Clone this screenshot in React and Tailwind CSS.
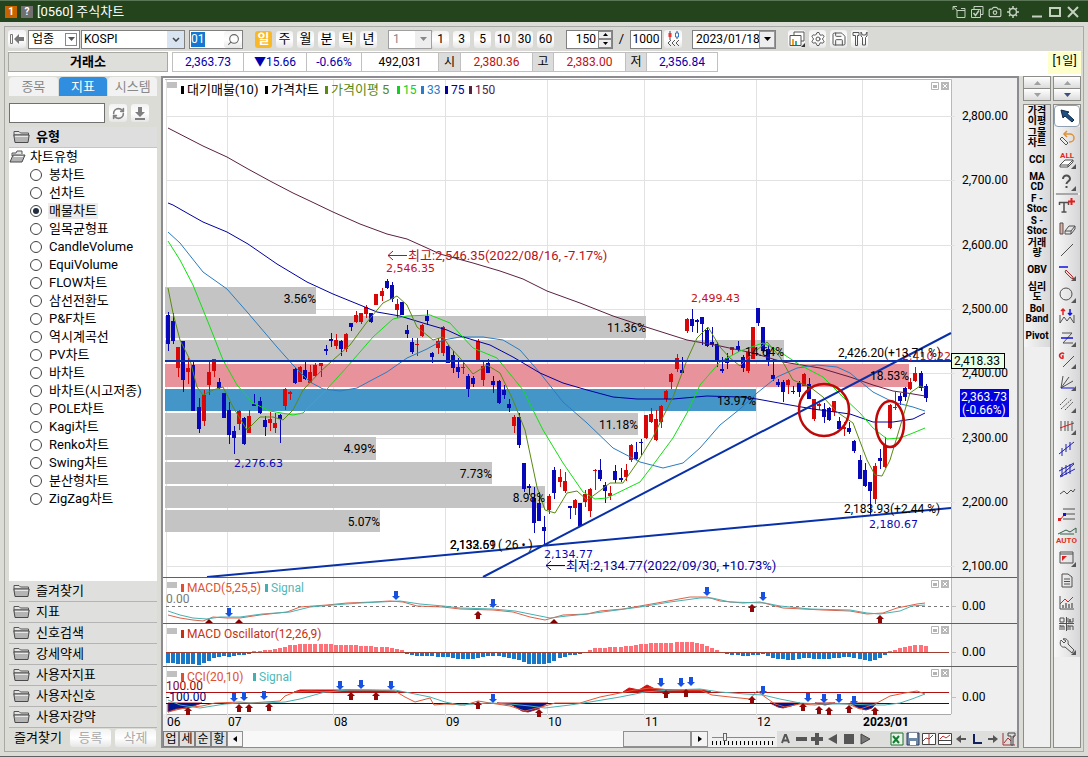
/**
 * @file App.jsx
 *
 * @description
 * [0560] 주식차트 화면.
 * 상단 툴바 / 시세 바 / 지표 트리 / 차트 / 우측 도구 막대로 구성된다.
 * 차트 좌표는 화면 픽셀 기준이며 viewBox 로 맞춘다.
 */

import React, { useState } from 'react';
import { RefreshCw, Search, Camera, Settings, Save } from 'lucide-react';

// ---------------------------------------------------------
// [차트 데이터]
// 봉: [고가y, 몸통상단y, 몸통하단y, 저가y, 양봉여부]
// ---------------------------------------------------------
const CANDLES = [
    [312, 315, 344, 351, 0], [313, 321, 341, 344, 0], [347, 347, 368, 377, 1], [341, 341, 380, 392, 0], [358, 368, 372, 384, 1],
    [362, 365, 411, 411, 0], [398, 407, 429, 433, 0], [390, 395, 421, 426, 1], [362, 372, 385, 395, 1], [359, 359, 371, 377, 1],
    [378, 382, 388, 389, 0], [393, 393, 418, 418, 0], [402, 410, 435, 444, 0], [426, 431, 438, 454, 0], [410, 411, 424, 430, 1],
    [417, 418, 444, 445, 0], [410, 416, 433, 433, 1], [394, 404, 406, 406, 0], [397, 401, 413, 414, 0], [416, 420, 427, 436, 0],
    [412, 419, 423, 431, 1], [413, 423, 428, 433, 1], [414, 415, 419, 443, 0], [388, 389, 406, 410, 1], [391, 392, 394, 400, 1],
    [367, 369, 383, 384, 0], [366, 367, 382, 382, 1], [362, 370, 379, 380, 0], [365, 372, 383, 383, 1], [363, 365, 376, 377, 1],
    [363, 363, 366, 377, 1], [345, 349, 351, 355, 0], [333, 339, 341, 347, 0], [334, 340, 346, 349, 1], [340, 341, 349, 356, 0],
    [333, 334, 349, 352, 1], [323, 323, 327, 331, 0], [311, 315, 322, 323, 1], [313, 313, 322, 324, 1], [305, 307, 314, 318, 1],
    [313, 313, 322, 323, 0], [294, 294, 305, 305, 1], [288, 291, 296, 301, 1], [279, 281, 288, 289, 0], [282, 285, 299, 302, 0],
    [299, 304, 310, 318, 1], [302, 302, 315, 315, 0], [325, 330, 334, 338, 0], [338, 342, 352, 354, 0], [338, 344, 345, 356, 1],
    [324, 325, 336, 337, 1], [310, 316, 321, 325, 0], [352, 353, 357, 363, 0], [338, 341, 348, 354, 1], [326, 327, 353, 356, 1],
    [345, 346, 363, 363, 0], [351, 355, 368, 373, 0], [358, 367, 372, 378, 0], [360, 367, 368, 374, 1], [374, 376, 389, 397, 0],
    [376, 378, 384, 387, 0], [339, 341, 360, 360, 1], [360, 366, 380, 386, 1], [359, 363, 373, 373, 0], [376, 381, 385, 393, 0],
    [380, 381, 403, 404, 0], [385, 390, 395, 399, 0], [399, 404, 408, 412, 0], [415, 417, 426, 433, 1], [413, 417, 445, 448, 0],
    [463, 463, 489, 492, 0], [484, 486, 488, 495, 0], [487, 498, 523, 533, 0], [492, 503, 521, 521, 0], [516, 527, 531, 545, 0],
    [494, 496, 510, 514, 1], [467, 470, 493, 499, 0], [469, 477, 482, 487, 1], [472, 481, 491, 493, 1], [506, 506, 508, 519, 0],
    [499, 500, 508, 515, 1], [503, 503, 526, 526, 0], [490, 494, 502, 507, 1], [488, 489, 511, 517, 1], [469, 470, 471, 490, 1],
    [459, 470, 479, 481, 0], [482, 485, 491, 503, 0], [486, 493, 496, 500, 1], [465, 471, 480, 483, 0], [468, 478, 480, 482, 0],
    [464, 470, 477, 481, 1], [444, 445, 460, 462, 1], [442, 452, 459, 460, 0], [439, 442, 443, 455, 0], [415, 415, 438, 439, 1],
    [408, 414, 422, 423, 1], [410, 419, 440, 441, 1], [405, 406, 422, 428, 1], [390, 391, 399, 402, 1], [373, 374, 382, 389, 1],
    [354, 358, 369, 372, 1], [357, 370, 373, 373, 0], [318, 319, 331, 333, 1], [309, 319, 326, 332, 0], [319, 320, 322, 333, 0],
    [317, 317, 324, 345, 0], [328, 330, 346, 347, 0], [327, 342, 345, 347, 0], [342, 344, 362, 367, 0], [357, 369, 371, 373, 0],
    [353, 358, 363, 369, 0], [347, 347, 350, 355, 1], [341, 346, 350, 352, 0], [355, 357, 368, 372, 0], [350, 352, 371, 373, 1],
    [327, 327, 359, 359, 1], [308, 308, 323, 326, 0], [327, 327, 351, 353, 0], [345, 349, 360, 366, 0], [359, 375, 379, 381, 0],
    [379, 382, 385, 387, 0], [380, 382, 392, 402, 0], [379, 380, 385, 394, 1], [386, 391, 392, 394, 0], [381, 383, 392, 397, 0],
    [373, 374, 386, 386, 1], [378, 384, 399, 399, 0], [399, 399, 419, 421, 1], [403, 404, 406, 410, 1], [403, 409, 417, 423, 0],
    [407, 408, 420, 421, 0], [401, 401, 412, 416, 1], [417, 421, 429, 431, 0], [422, 427, 429, 436, 1], [422, 428, 432, 434, 0],
    [440, 441, 451, 453, 0], [455, 460, 479, 479, 0], [463, 470, 486, 487, 0], [482, 482, 491, 515, 0], [463, 466, 499, 504, 1],
    [449, 458, 461, 469, 0], [437, 445, 467, 468, 1], [404, 405, 428, 429, 1], [392, 407, 408, 410, 1], [393, 396, 401, 405, 0],
    [387, 388, 397, 401, 0], [378, 382, 389, 390, 1], [367, 373, 381, 382, 1], [371, 373, 388, 391, 0], [384, 386, 398, 402, 0],
];
const candleX = (i) => Math.round(168 + 5.085 * i);

// 이동평균선
const MA_LINES = [
    { color: '#5a2040', points: '168,128 203,146 227,157 248,169 270,181 293,193 310,201 333,212 360,224 387,234 407,239 427,248 440,254 473,263 500,271 523,279 547,291 580,303 613,316 646,327 687,340 720,346 753,353 783,362 820,368 850,377 873,385 893,391 907,393 925,396' },
    { color: '#2a7cc0', points: '168,232 180,243 203,272 227,289 248,313 277,347 293,365 310,382 323,389 340,391 357,388 370,381 387,372 407,358 427,349 443,340 460,337 483,337 503,340 520,350 540,373 563,402 587,423 613,448 640,462 663,468 683,463 700,448 720,425 740,409 757,393 777,377 797,368 817,365 837,367 850,373 873,392 893,402 913,407 925,411' },
    { color: '#0000a0', points: '168,203 173,205 187,213 203,222 227,232 248,244 277,264 307,282 333,294 360,305 377,312 400,316 423,323 447,330 460,336 490,345 513,357 540,373 563,383 587,390 613,397 637,399 673,399 707,396 740,397 757,399 790,405 813,409 850,414 873,422 893,422 913,419 925,413' },
    { color: '#10e010', points: '168,241 180,260 193,285 210,327 223,360 237,385 253,403 270,411 293,415 303,413 327,389 347,367 373,337 393,319 407,316 430,315 440,319 450,323 460,334 473,348 497,358 523,390 543,430 563,463 583,492 595,499 607,498 640,482 653,465 673,438 687,413 700,385 720,362 740,351 763,343 777,350 800,365 823,377 843,397 860,413 873,428 887,439 900,438 913,433 925,428' },
    { color: '#5a8a10', points: '168,288 173,313 180,340 190,360 197,387 203,395 213,390 223,387 233,407 247,430 260,417 273,417 283,420 293,410 303,390 320,372 333,360 350,345 367,322 383,303 397,296 407,305 417,327 433,340 443,337 450,347 460,358 473,374 487,365 500,373 513,400 525,430 537,487 545,510 555,513 567,493 577,491 587,500 597,493 610,483 623,483 637,463 653,437 673,397 687,360 697,338 708,327 720,347 730,358 740,366 753,353 767,342 780,357 793,380 810,387 823,397 837,412 853,423 867,460 875,475 882,476 890,460 900,427 910,393 920,386 925,388' },
];

// 매물대: [y, 높이, 우측x, 색, 비율]
const BANDS = [
    [287, 27, 316, '#c4c4c4', '3.56%'],
    [316, 22, 646, '#c4c4c4', '11.36%'],
    [340, 22, 784, '#c4c4c4', '14.64%'],
    [364, 23, 909, '#e8929c', '18.53%'],
    [389, 22, 756, '#4496c8', '13.97%'],
    [413, 22, 638, '#c4c4c4', '11.18%'],
    [437, 23, 376, '#c4c4c4', '4.99%'],
    [462, 22, 492, '#c4c4c4', '7.73%'],
    [486, 22, 545, '#c4c4c4', '8.98%'],
    [510, 22, 380, '#c4c4c4', '5.07%'],
];

const PRICES = [[116, '2,800.00'], [180, '2,700.00'], [245, '2,600.00'], [309, '2,500.00'], [373, '2,400.00'], [438, '2,300.00'], [502, '2,200.00'], [566, '2,100.00']];
const MONTHS = [[166, '06'], [227, '07'], [333, '08'], [445, '09'], [547, '10'], [644, '11'], [756, '12'], [862, '2023/01']];

const LEGEND = [
    [181, '대기매물(10)', '#000000', 13], [265, '가격차트', '#000000', 13], [325, '가격이평 5', '#5a8a10', 13], [397, '15', '#10d020', 12],
    [421, '33', '#2a7cc8', 12], [445, '75', '#0000a0', 12], [469, '150', '#5a2040', 12],
];

// MACD 오실레이터: [x, 값(px)] 기준점을 봉 간격으로 보간한다
const OSC = [
    [168, -10], [185, -11], [192, -11], [198, -12], [208, -9], [213, -5], [222, -3], [232, -4], [240, -2], [251, -1], [254, 1],
    [268, 2], [280, 4], [292, 7], [300, 8], [333, 8], [337, 7], [356, 7], [360, 6], [390, 5], [397, 3], [404, 1], [407, -1],
    [418, -3], [447, -4], [460, -6], [473, -6], [480, -4], [493, -3], [505, -4], [513, -6], [522, -8], [530, -11], [545, -11],
    [552, -9], [560, -5], [572, -2], [582, -1], [587, 1], [594, 4], [620, 5], [632, 6], [644, 8], [652, 9], [666, 9], [677, 10], [692, 10],
    [700, 8], [708, 6], [713, 3], [720, 0.5], [725, -1], [743, -3], [755, -2], [763, -1], [770, -4], [777, -6], [790, -7],
    [803, -5], [823, -6], [836, -5], [850, -4], [860, -6], [870, -8], [877, -6], [884, -3], [888, -1], [890, 1], [897, 3], [907, 5], [917, 7], [925, 6],
];
function oscAt(x) {
    const k = Math.max(1, OSC.findIndex((p) => p[0] >= x));
    const [x0, v0] = OSC[k - 1];
    const [x1, v1] = OSC[k];
    return v0 + ((v1 - v0) * (x - x0)) / (x1 - x0);
}

// 매매 신호 화살표: [x, 꼭지y]
const DOWN_ARROWS = [
    [229, 617], [396, 600], [493, 608], [707, 596], [763, 601],
    [234, 702], [244, 701], [264, 700], [340, 690], [361, 689], [391, 690], [493, 703],
    [661, 687], [681, 687], [691, 686], [763, 695], [808, 702], [824, 703], [839, 703], [854, 705],
];
const UP_ARROWS = [
    [478, 611], [752, 604], [880, 615], [188, 707], [239, 704], [249, 704], [269, 703], [351, 692], [376, 692],
    [478, 701], [539, 709], [666, 690], [686, 689], [752, 696], [803, 703], [819, 706], [829, 707], [849, 705], [875, 707],
];

// ---------------------------------------------------------
// [트리 / 도구 목록]
// ---------------------------------------------------------
const CHART_TYPES = [
    '봉차트', '선차트', '매물차트', '일목균형표', 'CandleVolume', 'EquiVolume', 'FLOW차트', '삼선전환도', 'P&F차트', '역시계곡선',
    'PV차트', '바차트', '바차트(시고저종)', 'POLE차트', 'Kagi차트', 'Renko차트', 'Swing차트', '분산형차트', 'ZigZag차트',
];
const FOLDERS = ['즐겨찾기', '지표', '신호검색', '강세약세', '사용자지표', '사용자신호', '사용자강약'];
const QUICK = [['가격', '이평'], ['그물', '차트'], ['CCI'], ['MA', 'CD'], ['F -', 'Stoc'], ['S -', 'Stoc'], ['거래', '량'], ['OBV'], ['심리', '도'], ['Bol', 'Band'], ['Pivot']];

const btn = 'flex items-center justify-center rounded-[3px] bg-gradient-to-b from-[#f2f2f2] via-white to-[#e6e6e6]';

function Folder({ open }) {
    return (
        <svg width="17" height="14" viewBox="0 0 17 14" className="shrink-0">
            <path d={open ? 'M3 6V3h4l1-2h5v3' : 'M1 3V1.5h5l1.5 1.5h8V5H1z'} fill="#e4e4e4" stroke="#555" />
            <path d={open ? 'M1 12L4 5h12l-3 7z' : 'M.8 5h15.4L15 12.5H2z'} fill="#b4b4b4" stroke="#4a4a4a" />
            <path d={open ? 'M5 6.5h9' : 'M2 6.3h13'} stroke="#f4f4f4" />
        </svg>
    );
}

function Arrow({ dir = 'down', color = '#000' }) {
    const d = { down: 'M0 0h7L3.500 4z', up: 'M0 4h7L3.500 0z' }[dir];
    return (
        <svg width="7" height="4" viewBox="0 0 7 4" className="shrink-0"><path d={d} fill={color} /></svg>
    );
}

/* ── 타이틀 바 ─────────────────────────────────────── */
function TitleBar() {
    return (
        <header className="flex h-[22px] items-center gap-1 border-t border-[#5b7557] bg-[#24441e] pl-[5px] pr-2 text-white">
            <span className="flex h-3 w-3 items-center justify-center bg-[#c86400] text-[10px] leading-3 font-bold">1</span>
            <span className="flex h-3 w-3 items-center justify-center bg-[#707070] text-[10px] leading-3 font-bold">?</span>
            <h1 className="flex-1 text-[13px] leading-5">[0560] 주식차트</h1>
            <div className="flex items-center gap-1 text-[#c4d0c0]">
                <button aria-label="분리">
                    <svg width="14" height="14" fill="none" stroke="currentColor"><path d="M5 5V12.500h8V5.500H6M9 3.500h4v2" /><path d="M6 6L1 1.500M1 5V1.500h4" /></svg>
                </button>
                <button aria-label="복사">
                    <svg width="14" height="14" fill="none" stroke="currentColor"><path d="M4 4V1.500h9v8h-2.500M1.500 4.500h9v8h-9z" /><path d="M3.500 8l2 2.500L9 5.500" strokeWidth="1.500" /></svg>
                </button>
                <button aria-label="캡처"><Camera size={14} /></button>
                <button aria-label="설정">
                    <svg width="14" height="14" fill="none" stroke="currentColor"><circle cx="7" cy="7" r="3.500" strokeWidth="1.500" /><path d="M7 1v2M7 11v2M1 7h2M11 7h2M3 3l1.500 1.500M9.500 9.500L11 11M11 3L9.500 4.500M4.500 9.500L3 11" strokeWidth="1.500" /></svg>
                </button>
                <button aria-label="최소화" className="ml-1.5"><svg width="14" height="14"><path d="M2 11.500h10" stroke="currentColor" strokeWidth="2" /></svg></button>
                <button aria-label="최대화"><svg width="14" height="14"><path d="M2 3h10v8H2z" fill="none" stroke="currentColor" strokeWidth="2" /></svg></button>
                <button aria-label="닫기"><svg width="14" height="14"><path d="M2 2l10 10M12 2L2 12" stroke="currentColor" strokeWidth="2" /></svg></button>
            </div>
        </header>
    );
}

/* ── 상단 툴바 ─────────────────────────────────────── */
function Toolbar() {
    const [period, setPeriod] = useState('일');
    const field = 'h-[19px] border border-[#808080] bg-white text-[12px] leading-4';
    return (
        <div className="flex h-6 items-center bg-[#d9d9d6]">
            <button aria-label="접기" className={`${btn} h-[18px] w-[18px]`}>
                <svg width="16" height="12"><path d="M1.500 1.500h2v9h-2z" fill="none" stroke="#777" /><path d="M5 6l5-5v3h5v4h-5v3z" fill="#777" /></svg>
            </button>
            <div className={`${field} ml-0.5 flex w-[52px] items-center`}>
                <select aria-label="구분" className="w-9 appearance-none pl-[3px] outline-none"><option>업종</option></select>
                <span className="flex h-[13px] w-3 items-center justify-center border border-[#888]"><Arrow color="#555" /></span>
            </div>
            <div className={`${field} ml-px flex w-[104px] items-center`}>
                <select aria-label="종목" className="w-[85px] appearance-none pl-0.5 outline-none"><option>KOSPI</option></select>
                <span className="flex h-full flex-1 items-center justify-center bg-[#d8e4f2]"><svg width="8" height="5"><path d="M1 1l3 3 3-3" fill="none" stroke="#444" strokeWidth="1.500" /></svg></span>
            </div>
            <div className={`${field} ml-1 flex w-[54px] items-center`}>
                <span className="flex h-[15px] w-[34px] pl-px"><input aria-label="코드" defaultValue="01" className="h-[15px] w-[14px] bg-[#1478d2] text-white outline-none" /></span>
                <button aria-label="찾기" className={`${btn} h-full flex-1`}><Search size={13} color="#666" className="-scale-x-100" /></button>
            </div>
            <div className="ml-3 flex gap-1">
                {['일', '주', '월', '분', '틱', '년'].map((p) => (
                    <button key={p} onClick={() => setPeriod(p)} className={`${p === period ? 'flex items-center justify-center rounded-[3px] bg-[#f8b828] font-bold text-white' : btn} h-[17px] w-[17px] text-[13px] leading-4`}>{p}</button>
                ))}
            </div>
            <div className={`${field} ml-[11px] flex w-11 items-center border-[#a0a0a0] bg-[#e8e8e8] text-[#888]`}>
                <select aria-label="간격" className="w-[26px] appearance-none pl-1 outline-none"><option>1</option></select>
                <span className="flex h-full flex-1 items-center justify-center bg-[#eee]"><Arrow color="#888" /></span>
            </div>
            <div className="flex gap-1">
                {['1', '3', '5', '10', '30', '60'].map((n) => (
                    <button key={n} className={`${btn} h-[17px] w-[17px] text-[12px] leading-4`}>{n}</button>
                ))}
            </div>
            <div className={`${field} ml-3 flex w-[47px] items-center`}>
                <input aria-label="봉 개수" defaultValue="150" className="w-[29px] text-right outline-none" />
                <span className="ml-0.5 flex h-full flex-1 flex-col">
                    <button aria-label="증가" className="flex flex-1 items-center justify-center border border-[#888] bg-[#eee]"><svg width="5" height="3"><path d="M0 3h5L2.500 0z" /></svg></button>
                    <button aria-label="감소" className="flex flex-1 items-center justify-center border border-[#888] bg-[#eee]"><svg width="5" height="3"><path d="M0 0h5L2.500 3z" /></svg></button>
                </span>
            </div>
            <span className="w-[17px] text-center text-[13px]">/</span>
            <input aria-label="전체 개수" defaultValue="1000" className={`${field} w-8 text-center`} />
            <button aria-label="봉 이동" className={`${btn} ml-0.5 h-[18px] w-[18px]`}>
                <svg width="14" height="16"><path d="M4 0v9M11 0v8" stroke="#444" /><path d="M2.500 2h3v4h-3z" fill="#e33" /><path d="M9.500 2h3v4h-3z" fill="#fff" stroke="#37c" /><path d="M5 9l-3 3 3 3M9 9l-3 3 3 3M13 9l-3 3 3 3" fill="none" stroke="#555" /></svg>
            </button>
            <div className={`${field} ml-2.5 flex w-[84px] items-center`}>
                <select aria-label="날짜" className="w-[66px] appearance-none pl-[3px] outline-none"><option>2023/01/18</option></select>
                <span className="flex h-full flex-1 items-center justify-center border border-[#999] bg-[#eee]"><Arrow /></span>
            </div>
            <div className="ml-3 flex gap-1 text-[#555]">
                <button aria-label="창 배열" className={`${btn} h-[18px] w-[17px]`}>
                    <svg width="16" height="16"><path d="M5 4V1h10v9h-3M1 4.500h11v10H1z" fill="#fff" stroke="#555" /><path d="M4 8v6" stroke="#f0a020" strokeWidth="2" /><path d="M7 10v4" stroke="#30b0a0" strokeWidth="2" /><path d="M16 12v4h-4z" fill="#333" /></svg>
                </button>
                <button aria-label="환경" className={`${btn} h-[18px] w-[17px]`}><Settings size={16} strokeWidth={1.5} /></button>
                <button aria-label="저장" className={`${btn} h-[18px] w-[17px]`}><Save size={16} strokeWidth={1.5} /></button>
                <button aria-label="도구" className={`${btn} h-[18px] w-[17px]`}>
                    <svg width="16" height="16" fill="none" stroke="#555"><path d="M1 1.500h6v3H5.500v10h-2v-10H1zM9 1v4l1.500 1.500V14h3V6.500L15 5V1l-1.500 3h-3z" /></svg>
                </button>
            </div>
        </div>
    );
}

/* ── 시세 바 ──────────────────────────────────────── */
function QuoteBar() {
    const cells = [
        ['2,363.73', 'w-[71px] text-[#0000b0]'], ['▼15.66', 'w-[63px] text-[#0000b0]'], ['-0.66%', 'w-[55px] text-[#0000b0]'], ['492,031', 'w-[77px]'],
        ['시', 'w-[22px] bg-[#dcdcdc]'], ['2,380.36', 'w-[72px] text-[#c01010]'], ['고', 'w-[21px] bg-[#dcdcdc]'], ['2,383.00', 'w-[72px] text-[#c01010]'],
        ['저', 'w-[21px] bg-[#dcdcdc]'], ['2,356.84', 'w-[71px] text-[#0000b0]'],
    ];
    return (
        <div className="flex h-[25px] items-start bg-white pt-px text-[12px] leading-[18px]">
            <button className="h-5 w-[160px] border border-[#a8a8a0] bg-[#dededa] text-[13px] leading-[18px] font-bold">거래소</button>
            <div className="ml-1 flex h-5 border-y border-l border-[#c0c0c0]">
                {cells.map(([text, cls]) => (
                    <span key={text} className={`${cls} border-r border-[#c0c0c0] text-center`}>{text}</span>
                ))}
            </div>
            <span className="ml-auto h-[22px] w-[33px] bg-[#ffffcc] text-center leading-[18px]">[1일]</span>
        </div>
    );
}

/* ── 좌측 지표 트리 ─────────────────────────────────── */
function Sidebar() {
    const [type, setType] = useState('매물차트');
    return (
        <aside className="flex w-[149px] shrink-0 flex-col pl-px text-[13px]">
            <div className="mt-px flex h-[19px] gap-px text-[#888]">
                <button className="flex-1 rounded-t bg-[#f2f2f2] leading-[18px]">종목</button>
                <button className="flex-1 rounded-t bg-[#2f8ee0] leading-[18px] text-white">지표</button>
                <button className="flex-1 rounded-t bg-[#f2f2f2] leading-[18px]">시스템</button>
            </div>
            <div className="mt-[7px] flex h-5 items-center gap-1">
                <input aria-label="지표 검색" className="h-5 w-24 border border-[#707070] bg-white px-1" />
                <button aria-label="새로고침" className={`${btn} h-[18px] w-[18px]`}><RefreshCw size={13} strokeWidth={3} color="#808080" /></button>
                <button aria-label="내려받기" className={`${btn} h-[18px] w-[18px]`}><svg width="14" height="14"><path d="M5 1h4v5h3l-5 5-5-5h3zM2 12h10v2H2z" fill="#808080" /></svg></button>
            </div>
            <button className="mt-1 flex h-[21px] items-center gap-1.5 border-b border-[#c4c4c4] bg-[#dedede] pl-1 font-bold"><Folder />유형</button>
            <div className="flex-1 bg-white">
                <p className="flex h-[18px] items-center gap-1 leading-[18px]"><Folder open />차트유형</p>
                {CHART_TYPES.map((t) => (
                    <label key={t} className="flex h-[18px] items-center gap-1.5 pl-[21px] whitespace-nowrap">
                        <input
                            type="radio"
                            name="chartType"
                            checked={t === type}
                            onChange={() => setType(t)}
                            className="h-3 w-3 shrink-0 appearance-none rounded-full border border-[#404040] bg-white bg-clip-content p-0.5 checked:bg-[#203040]"
                        />
                        <span className={`px-px leading-4 ${t === type ? 'bg-[#ececec]' : ''}`}>{t}</span>
                    </label>
                ))}
            </div>
            {FOLDERS.map((f) => (
                <button key={f} className="flex h-[21px] items-center gap-1.5 border-b border-[#b4b4b4] bg-[#dfdfdd] pl-1 leading-4"><Folder />{f}</button>
            ))}
            <div className="flex h-5 items-center gap-1 pl-[5px]">
                <span className="w-[52px] leading-4 whitespace-nowrap">즐겨찾기</span>
                <button className={`${btn} h-[18px] w-[41px] text-[#aaa]`}>등록</button>
                <button className={`${btn} h-[18px] w-[41px] text-[#aaa]`}>삭제</button>
            </div>
        </aside>
    );
}

function PaneButtons({ y }) {
    return (
        <g transform={`translate(931 ${y})`}>
            <path d="M.5.5h7v7h-7z" fill="#fff" stroke="#b4b4b4" /><path d="M2 3h4v3H2z" fill="#b4b4b4" />
            <path d="M10 0h8v8h-8z" fill="#b8b8b8" /><path d="M12 2l4 4M16 2l-4 4" stroke="#fff" />
        </g>
    );
}

function PaneTitle({ y, name, color, signal, signalX }) {
    return (
        <>
            <rect x="167" y={y - 10} width="10" height="6" fill="#c0c0c0" />
            <rect x="181" y={y - 8} width="3" height="8" fill={color} />
            <text x="187" y={y} fill={color}>{name}</text>
            {signal && <rect x={signalX} y={y - 8} width="3" height="8" fill="#40b0b0" />}
            {signal && <text x={signalX + 6} y={y} fill="#50b8b8">{signal}</text>}
        </>
    );
}

/* ── 차트 ─────────────────────────────────────────── */
function Chart() {
    return (
        <svg viewBox="163 78 854 653" className="block h-auto w-full" style={{ fontSize: 12 }}>
            <rect x="163" y="78" width="854" height="653" fill="#fff" />
            <rect x="951" y="78" width="66" height="653" fill="#efefef" />
            <rect x="163" y="714" width="854" height="17" fill="#efefef" />
            <path d="M165 79.500H951.500V714" fill="none" stroke="#b8b8b8" />
            <path d="M166 714.500H951" stroke="#a8a8a8" />

            {/* 격자 */}
            <g stroke="#e2e2e2" shapeRendering="crispEdges">
                {PRICES.map(([y]) => <path key={y} d={`M166 ${y}.500H955`} />)}
                {MONTHS.map(([x]) => <path key={x} d={`M${x}.500 80V718`} />)}
            </g>

            {/* 매물대 */}
            {BANDS.map(([y, h, right, color]) => <rect key={y} x="165" y={y} width={right - 165} height={h} fill={color} />)}

            {/* 봉 */}
            <g shapeRendering="crispEdges">
                {CANDLES.map(([hi, top, bottom, lo, up], i) => (
                    <g key={i} fill={up ? '#d80808' : '#0808b8'}>
                        <rect x={candleX(i)} y={hi} width="1" height={Math.max(1, lo - hi)} />
                        <rect x={candleX(i) - 2} y={top} width="4" height={Math.max(1, bottom - top)} />
                    </g>
                ))}
            </g>
            {MA_LINES.map((m) => <polyline key={m.color} points={m.points} fill="none" stroke={m.color} />)}

            {/* 추세선, 표시 원 */}
            <g stroke="#0830a8" strokeWidth="2" fill="none">
                <path d="M165 361H951M483 577L951 333M207 577L951 508" />
            </g>
            <g stroke="#c00808" strokeWidth="2.500" fill="none">
                <ellipse cx="824" cy="410" rx="25" ry="26" />
                <ellipse cx="890" cy="424" rx="14" ry="23" />
            </g>

            {/* 라벨 */}
            {BANDS.map(([y, h, right, , pct]) => <text key={y} x={right} y={y + 16} textAnchor="end">{pct}</text>)}
            <rect x="167" y="82" width="10" height="6" fill="#c0c0c0" />
            {LEGEND.map(([x, text, color, size]) => (
                <g key={x} fill={color}>
                    <rect x={x} y="86" width="3" height="8" />
                    <text x={x + 6} y="94" fontSize={size}>{text}</text>
                </g>
            ))}
            <PaneButtons y={82} />
            <g fill="#b81020">
                <path d="M407 255.500H388M393 251l-5 4.500 5 4.500" fill="none" stroke="#b81020" />
                <text x="408" y="260" fontSize="13">최고:2,546.35(2022/08/16, -7.17%)</text>
            </g>
            <g fill="#0000a0">
                <path d="M565 565.500H546M551 561l-5 4.500 5 4.500" fill="none" stroke="#0000a0" />
                <text x="566" y="570" fontSize="13">최저:2,134.77(2022/09/30, +10.73%)</text>
            </g>
            <g fontSize="11" fontFamily="DejaVu Sans, sans-serif">
                <g fill="#c81010">
                    <text x="386" y="272">2,546.35</text>
                    <text x="691" y="302">2,499.43</text>
                    <text x="902" y="360">2,410.22</text>
                </g>
                <g fill="#0808b8">
                    <text x="234" y="467">2,276.63</text>
                    <text x="544" y="558">2,134.77</text>
                    <text x="869" y="528">2,180.67</text>
                </g>
            </g>
            <text x="838" y="357">2,426.20(+13.71 %)</text>
            <text x="844" y="513">2,183.93(+2.44 %)</text>
            <text x="450" y="549">2,132.51</text>
            <text x="450" y="549">2,133.69</text>
            <text x="498" y="549">( 26 • )</text>

            {/* 가격 축 */}
            {PRICES.map(([y, label]) => <text key={y} x="962" y={y + 4}>{label}</text>)}
            <rect x="951.500" y="353.500" width="53" height="15" fill="#e8ffe8" stroke="#000" />
            <text x="954" y="365">2,418.33</text>
            <rect x="960" y="389" width="49" height="28" fill="#0000e0" />
            <text x="961" y="401" fill="#fff">2,363.73</text>
            <text x="962" y="414" fill="#fff">(-0.66%)</text>

            {/* MACD */}
            <path d="M163 577.500H1017M163 623.500H1017M163 666.500H1017" stroke="#606060" />
            <path d="M166 606.500H951" stroke="#777" strokeDasharray="3 3" />
            <path d="M951 606.500h5M951 652.500h5M951 697.500h5" stroke="#c0c0c0" />
            <PaneTitle y={592} name="MACD(5,25,5)" color="#e05030" signal="Signal" signalX={265} />
            <text x="166" y="603" fill="#777">0.00</text>
            <polyline points="168,615 180,618 193,620 203,621 213,617 227,618 240,618 260,615 287,612 300,607 327,605 347,603 373,602 390,601 403,602 417,606 443,607 460,609 493,610 513,612 530,617 545,620 563,615 587,614 600,611 623,609 657,603 690,597 707,597 720,601 743,603 760,602 783,608 823,610 850,611 867,614 883,613 897,608 917,604 925,603" fill="none" stroke="#e06048" />
            <polyline points="168,611 180,615 193,618 207,619 220,617 240,617 262,614 290,612 310,607 333,605 360,603 400,601 420,604 443,606 460,608 493,609 515,611 535,615 550,618 567,616 587,614 610,611 640,607 670,602 700,598 712,598 730,602 765,603 780,606 810,609 850,610 867,613 880,614 900,611 912,606 925,605" fill="none" stroke="#48b0b0" />
            <PaneButtons y={580} />
            <text x="962" y="610">0.00</text>
            <path d="M205 623l4-4 4 4zM235 623l4-4 4 4zM550 623l4-4 4 4z" fill="#800000" />

            {/* MACD Oscillator */}
            <PaneTitle y={638} name="MACD Oscillator(12,26,9)" color="#c83010" />
            <path d="M166 652.500H949" stroke="#a04030" />
            <g shapeRendering="crispEdges">
                {CANDLES.map((_, i) => {
                    const v = Math.round(oscAt(Math.min(924, candleX(i))));
                    return <rect key={i} x={candleX(i) - 2} y={v > 0 ? 652 - v : 653} width="4" height={Math.abs(v)} fill={v > 0 ? '#ff7078' : '#1878c8'} />;
                })}
            </g>
            <PaneButtons y={626} />
            <text x="962" y="656">0.00</text>

            {/* CCI */}
            <PaneTitle y={681} name="CCI(20,10)" color="#e05030" signal="Signal" signalX={253} />
            <path d="M168 703v9l8-3 12-1 14-5zM497 703l15 2 10 6 6 1 10-3 10-6zM770 703l8 4 5 1 8-2 9-3zM815 703l10 2 10-2zM850 703l8 5 8 2 6-2 5-5z" fill="#001890" stroke="#a02030" />
            <path d="M294 692l6-2h50l40 1 12 1zM623 692l6-4 10 2 8-5 8 4 20 1 28 0 8 2z" fill="#d01010" stroke="#d01010" />
            <path d="M166 692.500H949" stroke="#b01010" />
            <path d="M166 703.500H949" stroke="#001080" />
            <polyline points="168,712 180,709 190,707 202,706 215,703 240,702 250,703 265,702 280,701 285,696 295,692 310,691 330,692 345,690 370,690 395,691 405,697 415,702 430,698 434,705 445,704 465,705 478,701 490,703 510,706 525,711 545,706 555,703 580,703 600,697 620,693 635,690 650,688 670,690 700,690 712,695 730,697 750,699 757,691 765,697 775,704 785,707 800,704 815,705 830,703 848,704 860,709 875,704 890,696 905,693 917,691 925,694" fill="none" stroke="#e05838" />
            <polyline points="168,700 180,705 200,708 225,704 240,703 265,703 285,702 300,699 325,692 350,690 375,690 395,690 415,694 430,697 445,702 460,705 490,703 510,704 530,706 545,708 570,705 590,702 620,697 645,692 670,690 700,689 720,692 745,694 763,695 780,699 800,703 820,704 850,704 870,705 885,705 900,703 912,699 925,694" fill="none" stroke="#48b0b0" />
            <text x="166" y="690" fill="#900010">100.00</text>
            <text x="166" y="701" fill="#000070">-100.00</text>
            <PaneButtons y={669} />
            <text x="962" y="701">0.00</text>

            {DOWN_ARROWS.map(([x, y]) => <path key={`${x}-${y}`} d={`M${x} ${y}l-4-4h2v-5h4v5h2z`} fill="#1850e0" />)}
            {UP_ARROWS.map(([x, y]) => <path key={`${x}-${y}`} d={`M${x} ${y}l-4 4h2v4h4v-4h2z`} fill="#900808" />)}

            {/* 날짜 축 */}
            {MONTHS.map(([x, label]) => <text key={x} x={x + 1} y="726" fontWeight={label.length > 2 ? 700 : 400}>{label}</text>)}
        </svg>
    );
}

/* ── 차트 하단 바 ──────────────────────────────────── */
function ChartFooter() {
    const icons = [
        ['글자', <path key="a" d="M5 12L8 4h1l3 8M6.500 9.500h4" fill="none" stroke="#555" strokeWidth="2" />],
        ['축소', <path key="a" d="M3 6h11v4H3z" fill="#555" />],
        ['확대', <path key="a" d="M6 2h4v4h4v4h-4v4H6v-4H2V6h4z" fill="#555" />],
        ['이전', <path key="a" d="M12 3v10L3 8z" fill="#555" />],
        ['정지', <path key="a" d="M3 3h10v10H3z" fill="#555" />],
        ['재생', <path key="a" d="M4 3v10l9-5z" fill="#777" stroke="#444" />],
        null,
        ['엑셀', <g key="a"><path d="M2 2h12v12H2z" fill="#e8f4e8" stroke="#207030" /><path d="M4 5l6 7M10 5l-6 7" stroke="#108030" strokeWidth="2" /></g>],
        ['저장', <g key="a"><path d="M2 2h12v12H2z" fill="#7088a8" stroke="#304060" /><path d="M4 2h8v5H4zM5 10h6v4H5z" fill="#fff" /></g>],
        ['분할', <g key="a"><path d="M1.500 2.500h13v11h-13z" fill="#fff" stroke="#444" /><path d="M8 2v11M2 10l3-3 3 1 4-4" fill="none" stroke="#a03030" /></g>],
        ['추이', <g key="a"><path d="M1.500 2.500h13v11h-13zM2 9.500h12" fill="#fff" stroke="#444" /><path d="M3 8l3-3 3 2 4-3" fill="none" stroke="#c03030" /></g>],
        ['왼쪽', <path key="a" d="M3 8l5-4v3h5v2H8v3z" fill="#555" />],
        ['로그', <path key="a" d="M5 3v9h8" fill="none" stroke="#102060" strokeWidth="2" />],
        ['오른쪽', <path key="a" d="M13 8L8 4v3H3v2h5v3z" fill="#555" />],
        ['도구', <g key="a"><path d="M2 2v12h12M3 12l4-5 3 3 4-6" fill="none" stroke="#a03030" /><path d="M7 2h7v3h-2v9h-2V5H7z" fill="#ddd" stroke="#444" /></g>],
    ];
    return (
        <div className="flex h-4 items-center bg-[#f0f0f0] text-[12px]">
            {['업', '세', '순', '황'].map((t) => (
                <button key={t} className="h-4 w-4 border border-[#808080] bg-[#e0e0e0] leading-[14px]">{t}</button>
            ))}
            <button aria-label="왼쪽으로" className="flex h-4 w-4 items-center justify-center border border-[#909090] bg-[#f4f4f4]"><svg width="4" height="6"><path d="M4 0v6L0 3z" /></svg></button>
            <div className="flex h-4 flex-1 justify-end bg-[#f8f8f8]"><span className="w-[68px] border border-[#909090] bg-[#ececec]" /></div>
            <button aria-label="오른쪽으로" className="flex h-4 w-[17px] items-center justify-center border border-[#909090] bg-[#f4f4f4]"><svg width="4" height="6"><path d="M0 0v6l4-3z" /></svg></button>
            <div className="mr-0.5 ml-1 flex w-[63px] flex-col">
                <input type="range" aria-label="봉 간격" defaultValue="18" className="h-2 w-full appearance-none bg-[linear-gradient(#888,#888)] bg-[length:100%_1px] bg-center bg-no-repeat [&::-webkit-slider-thumb]:h-2 [&::-webkit-slider-thumb]:w-1 [&::-webkit-slider-thumb]:appearance-none [&::-webkit-slider-thumb]:border [&::-webkit-slider-thumb]:border-[#666] [&::-webkit-slider-thumb]:bg-[#eee]" />
                <svg width="63" height="4"><path d="M0 2h63" stroke="#000" strokeWidth="4" strokeDasharray="1 3" /></svg>
            </div>
            <div className="flex h-full bg-[#dededc]">
                {icons.map((icon, i) => (icon
                    ? <button key={icon[0]} aria-label={icon[0]} className="flex h-full w-4 items-center justify-center"><svg width="16" height="16">{icon[1]}</svg></button>
                    : <span key={i} className="w-4" />))}
            </div>
        </div>
    );
}

// 그리기 도구 아이콘 (18x18)
const corner = <path d="M18 13v5h-5z" fill="#555" stroke="none" />;
const TOOLS = [
    ['선택', <path d="M3 3l8 2-2 1.500L16 13l-2 2-7-6-2 2z" fill="#205080" stroke="#102848" />],
    ['되돌리기', <g><path d="M7 5h5a4 4 0 010 8h-1" stroke="#e09030" strokeWidth="1.500" /><path d="M9 2L6 5l3 3" stroke="#e09030" strokeWidth="1.500" /><path d="M2 10l2-2 6 6-2 2z" fill="#eee" stroke="#555" /></g>],
    ['전체 지우기', <g><text x="2" y="7" fontSize="8" fontWeight="700" fill="#e02818" stroke="none">ALL</text><path d="M2 14l5-5h8l-5 5zM2 14v2h8v-2M10 16l5-5V9" fill="#fff" />{corner}</g>],
    ['도움말', <g><path d="M5 6a3.500 3.500 0 117 0c0 2-3.500 2.500-3.500 5M8.500 13v2" strokeWidth="2" />{corner}</g>],
    null,
    ['문자', <g><path d="M1 5.500h10M1.500 5v3M10.500 5v3M6 6v9M3.500 15h5" strokeWidth="1.500" /><path d="M13.500 1v7M10 4.500h7" stroke="#e02020" strokeWidth="2" /></g>],
    ['지우개', <g><path d="M2 4h3v11H2z" fill="#e8b0a0" /><path d="M7 12l4-5h6l-4 5zM7 12v3h6v-3M13 15l4-5V7" /></g>],
    ['선', <path d="M3 15L15 3" />],
    ['펜', <g><path d="M1 4h9" stroke="#1010e0" strokeWidth="1.500" /><path d="M8 7l6 6 2 3-3-1-6-6z" fill="#f8d0d0" stroke="#a03030" />{corner}</g>],
    ['원', <g><circle cx="8" cy="9" r="6" />{corner}</g>],
    ['패턴', <g><path d="M2 8v8l4-6 3 4 3-4 4 6V8" /><path d="M5 8V2M3 4l2-2 2 2" stroke="#e02020" strokeWidth="1.500" /><path d="M12 2v6M10 6l2 2 2-2" stroke="#1010e0" strokeWidth="1.500" /></g>],
    ['지그재그', <g><path d="M4 4h10L5 14h10" /><path d="M3 9h12" stroke="#1010e0" strokeWidth="1.500" />{corner}</g>],
    ['갠', <g><path d="M6 3a2.500 2.500 0 10-1 4V5H4" stroke="#e02020" strokeWidth="1.500" /><path d="M5 16L16 5" />{corner}</g>],
    ['부채꼴', <g><path d="M3 15L5 3M3 15L11 4M3 15L15 8" /><path d="M3 15h13" stroke="#1010e0" />{corner}</g>],
    ['평행선', <g><path d="M2 10l7-7M3 14L14 4M7 15l8-8" strokeDasharray="2 1" />{corner}</g>],
    ['사이클', <g><path d="M3 4v10M7 4v10M10 4v10M14 4v10" /><path d="M2 11L16 6" stroke="#d02020" />{corner}</g>],
    ['채널', <path d="M1 15L16 3M4 9v8M8 5v8M12 3v8" stroke="#2020b0" />],
    ['이중채널', <path d="M1 10L16 2M2 16L17 8M4 6v10M8 4v10M12 3v10M2 15L16 3" stroke="#2020b0" />],
    ['파동', <path d="M2 11l4-3 3 3 4-4 2 2 2-3" />],
    ['되돌림', <g><path d="M5 4h12M8 9h9M5 14h12" /><path d="M2 15l5-6" stroke="#d02020" /><path d="M0 13h3v3H0z" fill="#e02020" stroke="none" /><path d="M5 8h3v3H5z" fill="#1010e0" stroke="none" /></g>],
    ['자동', <g><path d="M0 7l8-4 4 2 6-4v5M2 7h14" stroke="#306048" /><text x="-2" y="16" fontSize="8" fontWeight="700" fill="#e03020" stroke="none">AUTO</text></g>],
    ['창', <g><path d="M2 3h13v11H2zM2 5h13" /><path d="M4 7h5l-5 5z" fill="#e02020" stroke="none" />{corner}</g>],
    ['문서', <path d="M4 3h6l4 3v10H4zM6 8h6M6 10.500h6M6 13h6" />],
    ['통계', <g><path d="M2 3v13h14" /><path d="M5 15v-3M8 15v-5M11 15v-4M14 15v-5" strokeWidth="2" stroke="#888" /><path d="M2 11l5-5 3 3 5-5" stroke="#e02020" /></g>],
    ['주기', <path d="M2 3h4v4H2zM10 3v4h2V4v3h3V3M2 10v5M2 11h2v4M4 11h2v4M10 10v5M10 11h2v4M12 11h3v4M8.500 2v14M1 8.500h15" />],
    ['설정', <g><path d="M3 3l3 3 2-2-3-2c3-1 6 1 5 5l6 6-2 3-7-6c-4 1-6-3-4-7z" />{corner}</g>],
];

function Spinner({ active }) {
    return (
        <div className="flex h-[25px] flex-col border border-[#8c8c88]">
            <button aria-label="위로" className="flex flex-1 items-center justify-center border-b border-[#8c8c88] bg-gradient-to-b from-white to-[#dcdcdc]"><Arrow dir="up" color="#a0a0a0" /></button>
            <button aria-label="아래로" className="flex flex-1 items-center justify-center bg-gradient-to-b from-white to-[#dcdcdc]"><Arrow color={active ? '#3c5080' : '#a0a0a0'} /></button>
        </div>
    );
}

/* ── 우측 도구 막대 ─────────────────────────────────── */
function SideTools() {
    return (
        <>
            <div className="ml-1 flex w-7 shrink-0 flex-col gap-[3px]">
                <Spinner />
                <div className="flex-1 border border-[#8c8c88] bg-[#efefef]">
                    {QUICK.map((q) => (
                        <button key={q.join()} className="flex h-[22px] w-full flex-col items-center justify-center bg-gradient-to-r from-[#f6f6f6] to-[#d8d8da] text-[10px] leading-[10px] font-bold whitespace-nowrap">
                            {q.map((line) => <span key={line} className="block h-[10px]">{line}</span>)}
                        </button>
                    ))}
                </div>
            </div>
            <div className="ml-0.5 flex w-7 shrink-0 flex-col gap-[3px]">
                <Spinner active />
                <div className="flex-1 border border-[#8c8c88] bg-[#efefef]">
                    {TOOLS.map((tool, i) => (tool ? (
                        <button key={tool[0]} aria-label={tool[0]} className={`flex h-[22px] w-full items-center justify-center ${i === 0 ? 'rounded-sm border border-[#90a0b0] bg-white' : 'bg-gradient-to-r from-[#f8f8f8] to-[#d6d6d8]'}`}>
                            <svg width="18" height="18" fill="none" stroke="#505050" className="overflow-visible">{tool[1]}</svg>
                        </button>
                    ) : <hr key={i} className="mx-0.5 border-t-2 border-[#a8a8a8]" />))}
                </div>
            </div>
        </>
    );
}

export default function App() {
    return (
        <div className="flex min-h-screen flex-col border-b border-[#606060] bg-[#dcdcd6] font-['Roboto','Noto_Sans_CJK_KR',sans-serif] text-black">
            <TitleBar />
            <main className="mx-1 mt-1 mb-1 flex flex-1 flex-col border border-[#a8a8a4] pr-0.5 pb-[3px] pl-[3px]">
                <Toolbar />
                <QuoteBar />
                <div className="flex flex-1">
                    <Sidebar />
                    <section className="ml-1 min-w-0 flex-1 self-start border-2 border-b border-[#8c8c90]">
                        <Chart />
                        <ChartFooter />
                    </section>
                    <SideTools />
                </div>
            </main>
        </div>
    );
}
